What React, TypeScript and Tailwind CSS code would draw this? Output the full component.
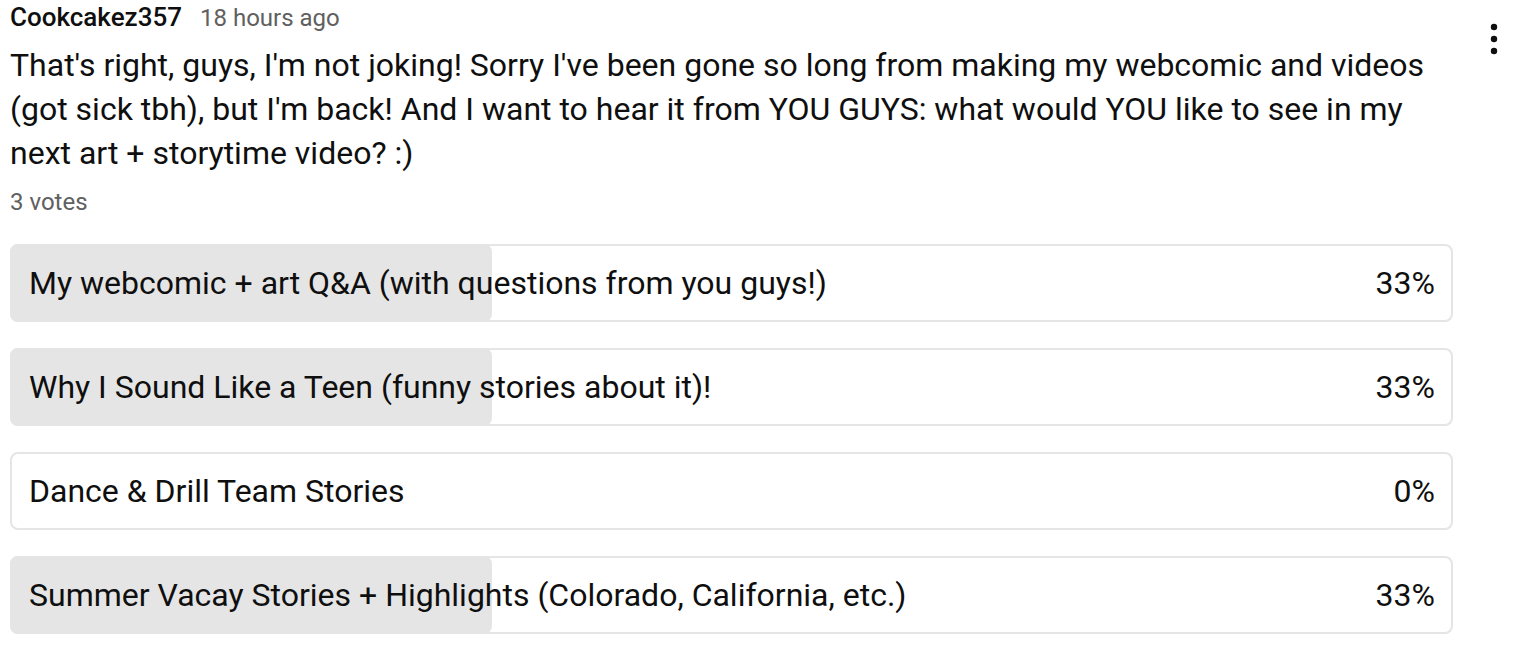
const options = [
  { label: "My webcomic + art Q&A (with questions from you guys!)", votes: 1 },
  { label: "Why I Sound Like a Teen (funny stories about it)!", votes: 1 },
  { label: "Dance & Drill Team Stories", votes: 0 },
  { label: "Summer Vacay Stories + Highlights (Colorado, California, etc.)", votes: 1 },
];

const total = 3;

const App = () => {
  return (
    <div className="min-h-screen bg-white font-['Roboto',sans-serif] text-[#0f0f0f]">
      <div className="flex flex-row pl-[10px] pr-[18px]">
        <div className="flex-grow">
          <div className="flex items-baseline gap-[18px] h-[43px]">
            <span className="text-[26px] font-medium leading-[34px]">Cookcakez357</span>
            <span className="text-[24px] leading-[34px] text-[#606060]">18 hours ago</span>
          </div>
          <p className="text-[32px] leading-[44px] max-w-[1440px]">
            That&apos;s right, guys, I&apos;m not joking! Sorry I&apos;ve been gone so long from making my webcomic and videos
            (got sick tbh), but I&apos;m back! And I want to hear it from YOU GUYS: what would YOU like to see in my
            next art + storytime video? :)
          </p>
          <div className="mt-[12px] text-[24px] leading-[30px] text-[#606060]">3 votes</div>
          <div className="mt-[27px] flex flex-col gap-[26px] w-[1443px]">
            {options.map((o) => {
              const pct = Math.round((o.votes / total) * 100);
              return (
                <div key={o.label} className="relative h-[78px] rounded-[8px] border-2 border-[#e5e5e5]">
                  {o.votes > 0 && (
                    <div
                      className="absolute left-[-2px] top-[-2px] bottom-[-2px] rounded-[8px] bg-[#e5e5e5]"
                      style={{ width: `calc(${(o.votes / total) * 100}% + 2px)` }}
                    />
                  )}
                  <div className="relative flex h-full items-center justify-between pl-[17px] pr-[16px] text-[32px]">
                    <span>{o.label}</span>
                    <span>{pct}%</span>
                  </div>
                </div>
              );
            })}
          </div>
        </div>
        <div className="pt-[21px] pl-[20px]">
          <svg width="12" height="36" viewBox="0 0 12 36" fill="#0f0f0f">
            <circle cx="6" cy="6" r="3.2" />
            <circle cx="6" cy="18" r="3.2" />
            <circle cx="6" cy="30" r="3.2" />
          </svg>
        </div>
      </div>
    </div>
  );
};

export default App;
